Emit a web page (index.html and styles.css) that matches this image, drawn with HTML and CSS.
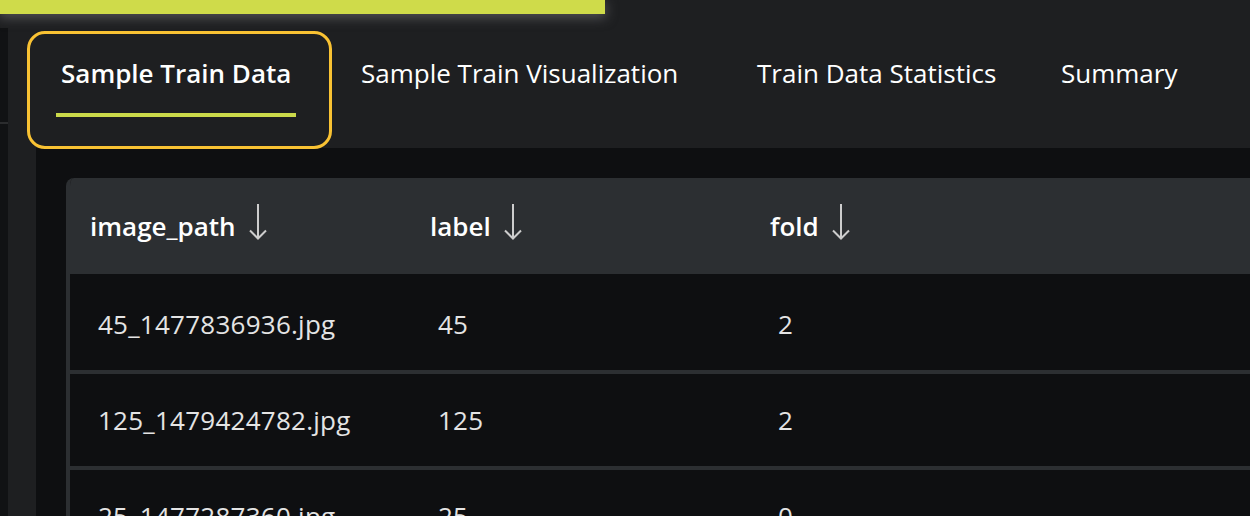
FILE: index.html
```html
<!DOCTYPE html>
<html lang="en">
<head>
<meta charset="utf-8">
<title>Sample Train Data</title>
<link rel="stylesheet" href="styles.css">
</head>
<body>
<div class="topbar"></div>
<div class="app">
  <aside class="rail"><div class="rail-top"></div></aside>
  <main class="main">
    <nav class="tabs">
      <div class="tab tab-data active"><span class="tab-inner">Sample Train Data<span class="underline"></span></span></div>
      <div class="tab tab-vis"><span class="tab-inner">Sample Train Visualization</span></div>
      <div class="tab tab-stats"><span class="tab-inner">Train Data Statistics</span></div>
      <div class="tab tab-summary"><span class="tab-inner">Summary</span></div>
    </nav>
    <section class="content">
      <div class="table">
        <div class="thead">
          <div class="th">image_path<svg class="sort" viewBox="0 0 18 36" width="18" height="36"><path d="M9 0V35M1 26.5L9 34.5L17 26.5"/></svg></div>
          <div class="th">label<svg class="sort" viewBox="0 0 18 36" width="18" height="36"><path d="M9 0V35M1 26.5L9 34.5L17 26.5"/></svg></div>
          <div class="th">fold<svg class="sort" viewBox="0 0 18 36" width="18" height="36"><path d="M9 0V35M1 26.5L9 34.5L17 26.5"/></svg></div>
        </div>
        <div class="tr first">
          <div class="td">45_1477836936.jpg</div>
          <div class="td">45</div>
          <div class="td">2</div>
        </div>
        <div class="tr">
          <div class="td">125_1479424782.jpg</div>
          <div class="td">125</div>
          <div class="td">2</div>
        </div>
        <div class="tr">
          <div class="td">25_1477287360.jpg</div>
          <div class="td">25</div>
          <div class="td">0</div>
        </div>
      </div>
    </section>
  </main>
</div>
</body>
</html>
```

FILE: styles.css
```css
*, *::before, *::after { box-sizing: border-box; }

html, body {
  margin: 0;
  padding: 0;
}

body {
  width: 1250px;
  height: 516px;
  overflow: hidden;
  background: #1e1f21;
  font-family: "Open Sans", "Noto Sans", "DejaVu Sans", sans-serif;
  color: #ffffff;
}

.topbar {
  position: relative;
  z-index: 2;
  width: 605px;
  height: 14px;
  background: #cfdb4a;
  box-shadow: 0 3px 12px 1px rgba(120, 121, 124, 0.55);
}

.app {
  display: flex;
  height: 502px;
}

.rail {
  width: 8px;
  margin-top: 14px;
  background: #111214;
}

.rail-top {
  height: 96px;
  border-bottom: 2px solid #2b2c2e;
}

.main {
  flex: 1;
  min-width: 0;
  display: flex;
  flex-direction: column;
}

.tabs {
  height: 134px;
  flex-shrink: 0;
  display: grid;
  grid-template-columns: 300px 396px 304px auto;
  padding-left: 53px;
}

.tab {
  position: relative;
  padding-top: 41px;
  font-size: 26px;
  line-height: 36px;
  color: #ffffff;
  white-space: nowrap;
}

.tab-inner {
  display: inline-block;
}

.tab.active {
  font-weight: 600;
}

.tab.active::before {
  content: "";
  position: absolute;
  left: -34px;
  top: 17px;
  width: 305px;
  height: 118px;
  border: 3px solid #f9c233;
  border-radius: 18px;
}

.underline {
  display: block;
  height: 4px;
  margin: 22px -5px 0;
  background: #cbd94a;
}

.content {
  flex: 1;
  min-height: 0;
  margin-left: 28px;
  background: #0e0f11;
  padding: 30px 0 0 30px;
  overflow: hidden;
}

.table {
  border-left: 4px solid #2c2f32;
  border-top-left-radius: 8px;
  overflow: hidden;
}

.thead,
.tr {
  display: grid;
  grid-template-columns: 340px 340px 1fr;
  align-items: center;
}

.thead {
  height: 96px;
  padding-left: 20px;
  background: #2c2f32;
}

.th {
  display: flex;
  align-items: center;
  gap: 13px;
  font-size: 26px;
  line-height: 36px;
  font-weight: 600;
  color: #ffffff;
}

.sort {
  margin-bottom: 9px;
  fill: none;
  stroke: #cdcdcd;
  stroke-width: 2;
}

.tr {
  height: 96px;
  padding-left: 28px;
  border-top: 4px solid #2c2f32;
  background: #0e0f11;
}

.tr.first {
  border-top-color: #0e0f11;
}

.td {
  font-size: 26px;
  line-height: 36px;
  letter-spacing: 0.25px;
  color: #e4e4e4;
  white-space: nowrap;
}
```
